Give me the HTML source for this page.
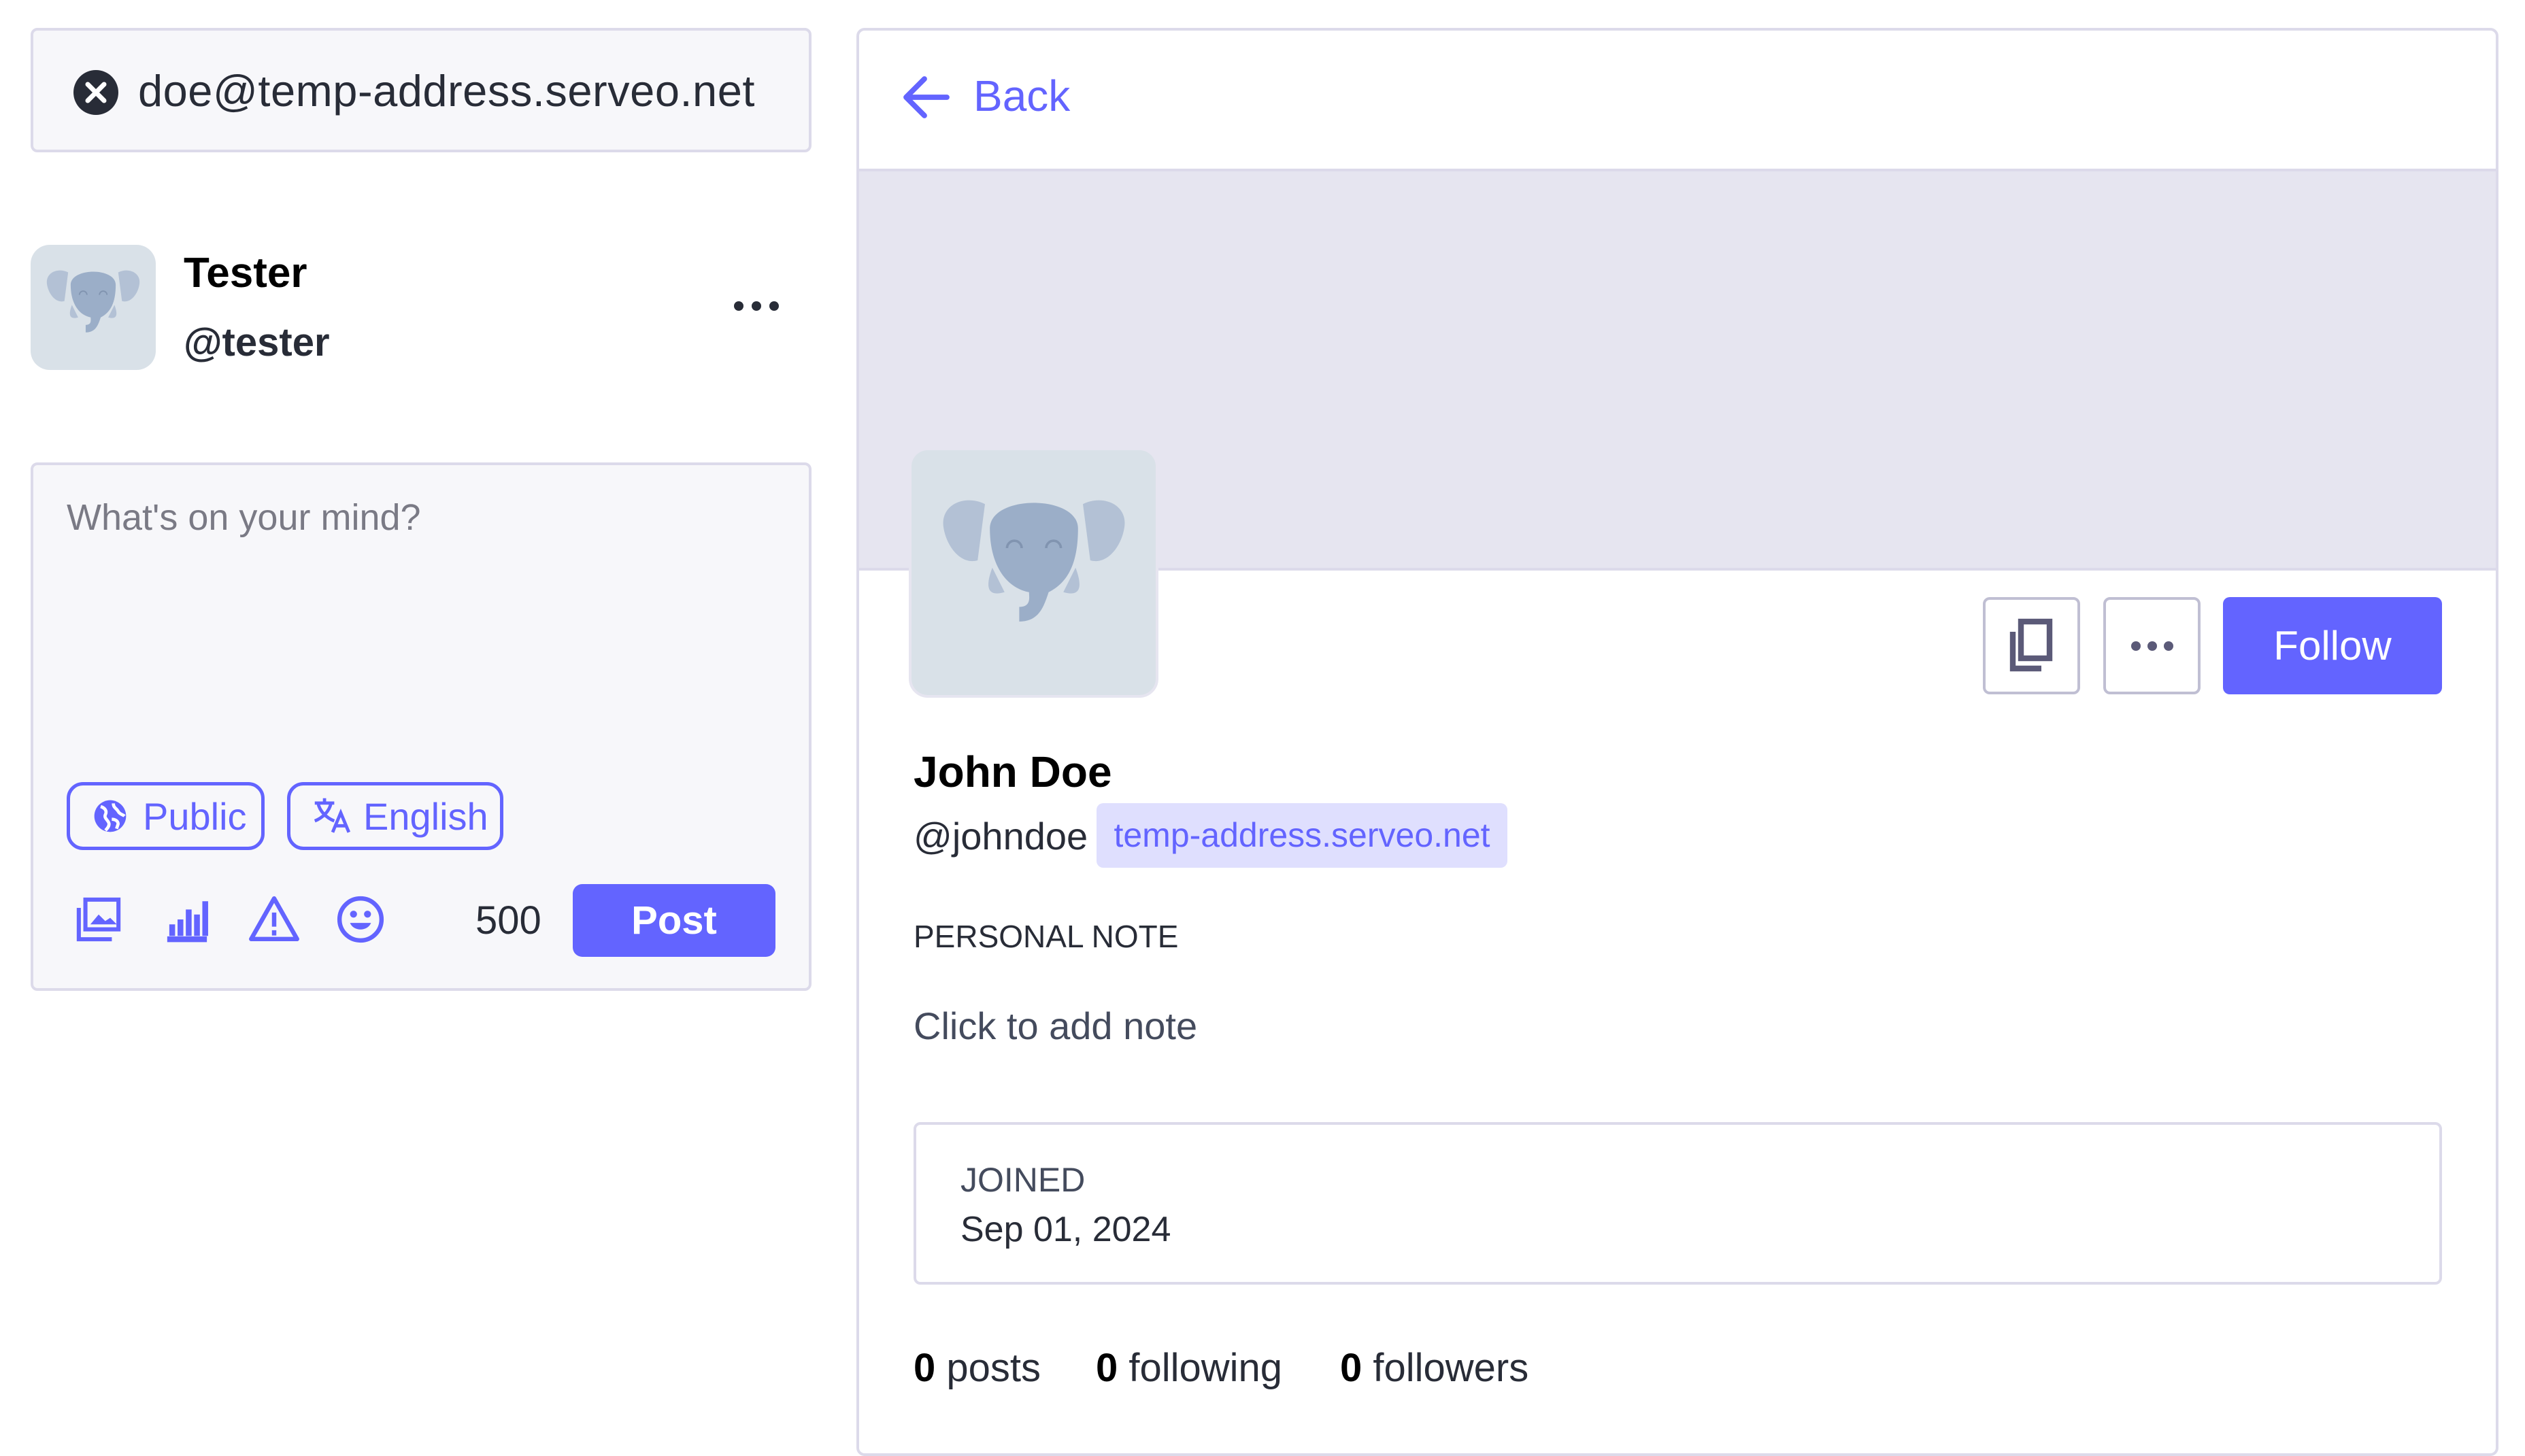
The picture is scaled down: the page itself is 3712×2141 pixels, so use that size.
<!DOCTYPE html>
<html><head><meta charset="utf-8"><style>
*{box-sizing:border-box;margin:0;padding:0}
body{width:3712px;height:2088px;background:#fff;font-family:"Liberation Sans",sans-serif;position:relative;overflow:hidden;color:#282c37}
.a{position:absolute;white-space:nowrap}
</style></head><body>
<!-- search -->
<div class="a" style="left:45px;top:41px;width:1148px;height:183px;background:#f7f7fa;border:4px solid #dcdaea;border-radius:10px"></div>
<svg class="a" style="left:107px;top:102px" width="68" height="68" viewBox="0 0 68 68"><circle cx="34" cy="34" r="33" fill="#282c37"/><path d="M22 22L46 46M46 22L22 46" stroke="#fff" stroke-width="7" stroke-linecap="round"/></svg>
<div class="a" style="left:203px;top:94px;font-size:65px;line-height:80px;color:#282c37;letter-spacing:0.5px;width:930px;overflow:hidden">doe@temp-address.serveo.net</div>
<!-- account -->
<div class="a" style="left:45px;top:360px;width:184px;height:184px;background:#d9e1e8;border-radius:28px;overflow:hidden">
<svg width="184" height="184" viewBox="0 0 100 100"><path d="M30 22c-8-4-18 0-17 9 1 8 7 16 14 14z" fill="#b3c1d5"/><path d="M70 22c8-4 18 0 17 9-1 8-7 16-14 14z" fill="#b3c1d5"/><path d="M33 48c-3 8-2 12 5 10M67 48c3 8 2 12-5 10" fill="#b3c1d5"/><path d="M32 32c0-14 36-14 36 0 0 14-4 22-12 26-2 6-4 12-12 12v-6c5 0 4-4 4-6-10-2-16-12-16-26z" fill="#9baec8"/><path d="M39 40a3 3 0 0 1 6 0M55 40a3 3 0 0 1 6 0" stroke="#8194b0" stroke-width="1" fill="none"/></svg></div>
<div class="a" style="left:270px;top:366px;font-size:62px;font-weight:bold;color:#000">Tester</div>
<div class="a" style="left:270px;top:470px;font-size:58px;font-weight:bold;color:#282c37">@tester</div>
<svg class="a" style="left:1076px;top:438px" width="72" height="24"><circle cx="10" cy="12" r="7" fill="#282c37"/><circle cx="36" cy="12" r="7" fill="#282c37"/><circle cx="62" cy="12" r="7" fill="#282c37"/></svg>
<!-- compose -->
<div class="a" style="left:45px;top:680px;width:1148px;height:777px;background:#f7f7fa;border:4px solid #dcdaea;border-radius:10px"></div>
<div class="a" style="left:98px;top:730px;font-size:54px;color:#7a7a85">What's on your mind?</div>
<div class="a" style="left:98px;top:1150px;width:291px;height:100px;border:5px solid #6364ff;border-radius:24px"></div>
<svg class="a" style="left:134px;top:1172px" width="56" height="56" viewBox="0 0 24 24"><circle cx="12" cy="12" r="10" fill="#6364ff"/><path d="M6 6c3 1 4 3 3 5s1 3 2 5-1 4-2 5M14 4c0 3 2 3 3 5s3 2 4 3M13 14c2 0 4 1 4 3l-1 3" stroke="#fff" stroke-width="2" fill="none"/></svg>
<div class="a" style="left:210px;top:1168px;font-size:56px;color:#6364ff">Public</div>
<div class="a" style="left:422px;top:1150px;width:318px;height:100px;border:5px solid #6364ff;border-radius:24px"></div>
<svg class="a" style="left:458px;top:1170px" width="62" height="60" viewBox="0 0 26 24"><path d="M2 4h12M8 1v3M4 4c1 5 5 9 10 11M12 4c-1 5-5 9-10 11M13 22l5-12 5 12M15 18h6" stroke="#6364ff" stroke-width="2" fill="none"/></svg>
<div class="a" style="left:534px;top:1168px;font-size:56px;color:#6364ff">English</div>
<svg class="a" style="left:110px;top:1318px" width="70" height="68" viewBox="0 0 28 28"><rect x="6" y="2" width="20" height="18" stroke="#6364ff" stroke-width="2.5" fill="none"/><path d="M2 7v19h20" stroke="#6364ff" stroke-width="2.5" fill="none"/><path d="M9 17l5-6 4 4 3-2 4 4z" fill="#6364ff"/></svg>
<svg class="a" style="left:240px;top:1318px" width="70" height="68" viewBox="0 0 28 28"><path d="M2 26h24M5 24V17M10 24V14M15 24V8M20 24V11M25 24V3" stroke="#6364ff" stroke-width="3.5"/></svg>
<svg class="a" style="left:364px;top:1316px" width="78" height="70" viewBox="0 0 30 27"><path d="M15 2L28 25H2z" stroke="#6364ff" stroke-width="2.5" fill="none" stroke-linejoin="round"/><path d="M15 10v8M15 20v3" stroke="#6364ff" stroke-width="2.5"/></svg>
<svg class="a" style="left:494px;top:1316px" width="72" height="72" viewBox="0 0 28 28"><circle cx="14" cy="14" r="12" stroke="#6364ff" stroke-width="2.5" fill="none"/><circle cx="10" cy="11" r="2" fill="#6364ff"/><circle cx="18" cy="11" r="2" fill="#6364ff"/><path d="M8 16c2 5 10 5 12 0z" fill="#6364ff"/></svg>
<div class="a" style="left:699px;top:1320px;font-size:58px;color:#282c37">500</div>
<div class="a" style="left:842px;top:1300px;width:298px;height:107px;background:#6364ff;border-radius:14px;color:#fff;font-size:58px;font-weight:bold;text-align:center;line-height:107px">Post</div>
<!-- right panel -->
<div class="a" style="left:1259px;top:41px;width:2414px;height:2100px;border:4px solid #dcdaea;border-radius:12px;overflow:hidden;background:#fff">
<div style="position:absolute;left:0;top:203px;width:100%;height:591px;background:#e6e5f0;border-top:4px solid #dcdaea;border-bottom:4px solid #dcdaea"></div>
</div>
<svg class="a" style="left:1326px;top:110px" width="72" height="66" viewBox="0 0 24 22"><path d="M22 11H3M11 2L2 11l9 9" stroke="#6364ff" stroke-width="2.6" fill="none" stroke-linecap="round" stroke-linejoin="round"/></svg>
<div class="a" style="left:1431px;top:104px;font-size:64px;color:#6364ff">Back</div>
<div class="a" style="left:1336px;top:658px;width:367px;height:368px;background:#d9e1e8;border:4px solid #e6e5f0;border-radius:28px;overflow:hidden">
<svg width="360" height="360" viewBox="0 0 100 100"><path d="M30 22c-8-4-18 0-17 9 1 8 7 16 14 14z" fill="#b3c1d5"/><path d="M70 22c8-4 18 0 17 9-1 8-7 16-14 14z" fill="#b3c1d5"/><path d="M33 48c-3 8-2 12 5 10M67 48c3 8 2 12-5 10" fill="#b3c1d5"/><path d="M32 32c0-14 36-14 36 0 0 14-4 22-12 26-2 6-4 12-12 12v-6c5 0 4-4 4-6-10-2-16-12-16-26z" fill="#9baec8"/><path d="M39 40a3 3 0 0 1 6 0M55 40a3 3 0 0 1 6 0" stroke="#8194b0" stroke-width="1" fill="none"/></svg></div>
<div class="a" style="left:2915px;top:878px;width:143px;height:143px;border:4px solid #c0bfd3;border-radius:10px"></div>
<svg class="a" style="left:2950px;top:908px" width="72" height="84" viewBox="0 0 24 28"><rect x="7" y="2" width="14" height="18" stroke="#5b5a78" stroke-width="2.8" fill="none"/><path d="M3 7v18h14" stroke="#5b5a78" stroke-width="2.8" fill="none"/></svg>
<div class="a" style="left:3092px;top:878px;width:143px;height:143px;border:4px solid #c0bfd3;border-radius:10px"></div>
<svg class="a" style="left:3130px;top:938px" width="68" height="24"><circle cx="10" cy="12" r="7" fill="#5b5a78"/><circle cx="34" cy="12" r="7" fill="#5b5a78"/><circle cx="58" cy="12" r="7" fill="#5b5a78"/></svg>
<div class="a" style="left:3268px;top:878px;width:322px;height:143px;background:#6364ff;border-radius:10px;color:#fff;font-size:60px;text-align:center;line-height:143px">Follow</div>
<div class="a" style="left:1343px;top:1098px;font-size:64px;font-weight:bold;color:#000">John Doe</div>
<div class="a" style="left:1343px;top:1197px;font-size:56px;color:#282c37">@johndoe</div>
<div class="a" style="left:1612px;top:1181px;width:604px;height:95px;background:#dfdffe;border-radius:10px;color:#6364ff;font-size:50px;text-align:center;line-height:95px">temp-address.serveo.net</div>
<div class="a" style="left:1343px;top:1350px;font-size:46px;color:#282c37">PERSONAL NOTE</div>
<div class="a" style="left:1343px;top:1476px;font-size:56px;color:#444b5d">Click to add note</div>
<div class="a" style="left:1343px;top:1650px;width:2247px;height:239px;border:4px solid #dcdaea;border-radius:10px"></div>
<div class="a" style="left:1412px;top:1706px;font-size:50px;color:#444b5d">JOINED</div>
<div class="a" style="left:1412px;top:1778px;font-size:52px;color:#282c37">Sep 01, 2024</div>
<div class="a" style="left:1343px;top:1978px;font-size:58px;color:#282c37"><b style="color:#000">0</b> posts</div>
<div class="a" style="left:1611px;top:1978px;font-size:58px;color:#282c37"><b style="color:#000">0</b> following</div>
<div class="a" style="left:1970px;top:1978px;font-size:58px;color:#282c37"><b style="color:#000">0</b> followers</div>
</body></html>
